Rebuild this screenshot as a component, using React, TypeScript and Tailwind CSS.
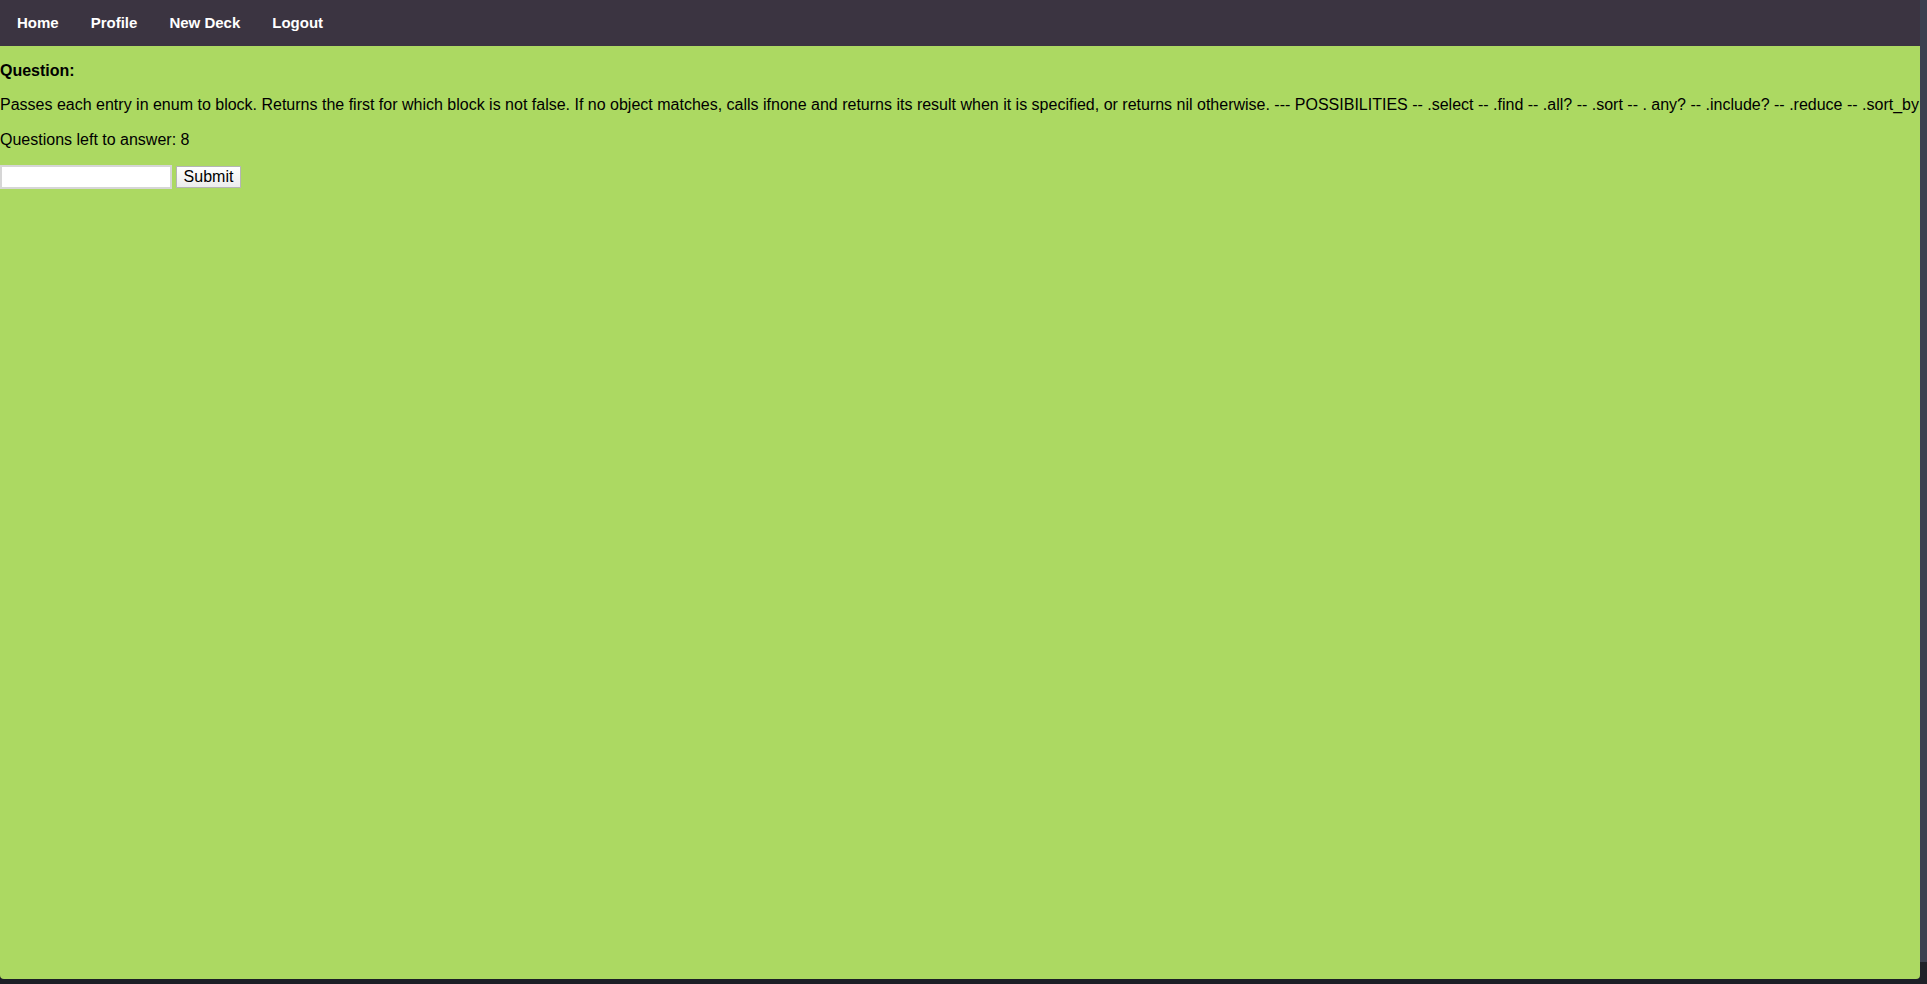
const links = ["Home", "Profile", "New Deck", "Logout"];

const question =
  "Passes each entry in enum to block. Returns the first for which block is not false. If no object matches, calls ifnone and returns its result when it is specified, or returns nil otherwise. --- POSSIBILITIES -- .select -- .find -- .all? -- .sort -- . any? -- .include? -- .reduce -- .sort_by";

export default function App() {
  return (
    <div className="flex h-[984px] w-[1927px] overflow-hidden bg-[#1c1f26] font-['Liberation_Sans',Arial,sans-serif] text-black">
      <div className="flex w-[1920px] flex-col">
        <div className="flex h-[979px] flex-col overflow-hidden rounded-b-[4px] bg-[#acd962]">
          {/* Nav */}
          <nav className="flex h-[46px] shrink-0 items-center bg-[#3b3441]">
            {links.map((l) => (
              <a
                key={l}
                href="#"
                className="px-4 text-[15px] font-bold text-white first:pl-[17px]"
              >
                {l}
              </a>
            ))}
          </nav>

          {/* Content */}
          <div className="text-base leading-[1.15]">
            <p className="my-4 font-bold">Question:</p>
            <p className="my-4 whitespace-nowrap">{question}</p>
            <p className="my-4">Questions left to answer: 8</p>
            <form className="flex items-center gap-[4px]" onSubmit={(e) => e.preventDefault()}>
              <input
                type="text"
                className="h-[24px] w-[172px] border-2 border-[#d6d6d6] bg-white px-1 text-base outline-none"
              />
              <button
                type="submit"
                className="h-[22px] w-[65px] border border-[#b5b5b5] bg-gradient-to-b from-white to-[#ececec] text-base leading-none"
              >
                Submit
              </button>
            </form>
          </div>
        </div>
      </div>
      <div className="flex w-[7px] flex-col">
        <div className="h-[962px] bg-[#3b4050]" />
        <div className="flex-1 bg-[#1f2229]" />
      </div>
    </div>
  );
}
